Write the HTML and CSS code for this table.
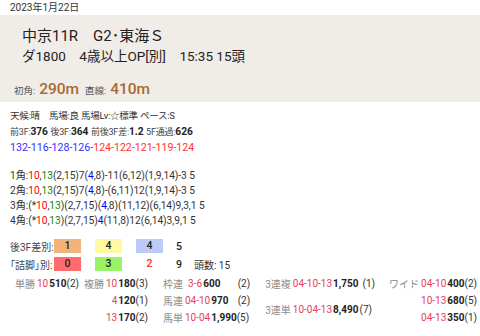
FILE: index.html
```html
<!DOCTYPE html>
<html lang="ja">
<head>
<meta charset="utf-8">
<link rel="stylesheet" href="styles.css">
</head>
<body>
<div class="date">2023年1月22日</div>
<div class="head">
  <div class="title">中京11R　G2･東海Ｓ</div>
  <div class="sub">ダ1800　4歳以上OP[別]　15:35 15頭</div>
  <div class="course"><span class="lb">初角:</span> <span class="val">290m</span> <span class="lb lb2">直線:</span> <span class="val">410m</span></div>
</div>
<div class="info">
  <div class="line l1">天候:晴　馬場:良 馬場Lv:☆標準 ペース:S</div>
  <div class="line"><span class="sm">前3F:</span><b>376</b> <span class="sm">後3F:</span><b>364</b> <span class="sm">前後3F差:</span><b>1.2</b> <span class="sm">5F通過:</span><b>626</b></div>
  <div class="line lap"><span class="bl">132-116-128-126-</span><span class="rd">124-122-121-119-124</span></div>
</div>
<div class="corners">
  <div>1角:<span class="r">10</span>,<span class="g">13</span>(2,15)7(<span class="b">4</span>,8)-11(6,12)(1,9,14)-3 5</div>
  <div>2角:<span class="r">10</span>,<span class="g">13</span>(2,15)7(<span class="b">4</span>,8)-(6,11)12(1,9,14)-3 5</div>
  <div>3角:(*<span class="r">10</span>,<span class="g">13</span>)(2,7,15)(<span class="b">4</span>,8)(11,12)(6,14)9,3,1 5</div>
  <div>4角:(*<span class="r">10</span>,<span class="g">13</span>)(2,7,15)<span class="b">4</span>(11,8)12(6,14)3,9,1 5</div>
</div>
<div class="diff">
  <div class="drow"><span class="dl">後3F差別:</span><span class="box c-or">1</span><span class="box c-ye">4</span><span class="box c-bl">4</span><span class="rest">5</span></div>
  <div class="drow"><span class="dl">「詰脚」別:</span><span class="box c-rd">0</span><span class="box c-gr">3</span><span class="box t-rd">2</span><span class="rest">9</span><span class="cnt">頭数: 15</span></div>
</div>
<div class="pay">
  <div class="grp ga">
    <span class="k">単勝</span><span class="n">10</span><span class="p">510</span><span class="o">(2)</span>
  </div>
  <div class="grp gb">
    <span class="k">複勝</span><span class="n">10</span><span class="p">180</span><span class="o">(3)</span>
    <span></span><span class="n">4</span><span class="p">120</span><span class="o">(1)</span>
    <span></span><span class="n">13</span><span class="p">170</span><span class="o">(2)</span>
  </div>
  <div class="grp gc">
    <span class="k">枠連</span><span class="n n1">3-6</span><span class="p p1">600</span><span class="o">(2)</span>
    <span class="k">馬連</span><span class="n">04-10</span><span class="p">970</span><span class="o">(2)</span>
    <span class="k">馬単</span><span class="n">10-04</span><span class="p">1,990</span><span class="o o3">(5)</span>
  </div>
  <div class="grp gd">
    <span class="k">3連複</span><span class="n">04-10-13</span><span class="p">1,750</span><span class="o o4">(1)</span>
    <span class="k span2">3連単</span><span class="n span2">10-04-13</span><span class="p span2">8,490</span><span class="o span2">(7)</span>
  </div>
  <div class="grp ge">
    <span class="k">ワイド</span><span class="n">04-10</span><span class="p">400</span><span class="o">(2)</span>
    <span></span><span class="n">10-13</span><span class="p">680</span><span class="o">(5)</span>
    <span></span><span class="n">04-13</span><span class="p">350</span><span class="o">(1)</span>
  </div>
</div>
</body>
</html>
```
FILE: styles.css
```css
html, body {
  margin: 0;
  padding: 0;
  background: #fff;
}
body {
  font-family: Roboto, "Noto Sans CJK JP", sans-serif;
  color: #333;
  width: 480px;
  height: 336px;
  overflow: hidden;
}
.date {
  font-size: 10px;
  line-height: 15px;
  padding-left: 10px;
  color: #333;
}
.head {
  background: #f0ede8;
  height: 87px;
  padding: 10px 0 0 22px;
  box-sizing: border-box;
}
.title {
  font-size: 15px;
  line-height: 22px;
  color: #222;
}
.sub {
  font-size: 13.5px;
  line-height: 18px;
  color: #222;
}
.course {
  margin-top: 14px;
  margin-left: -8px;
  font-size: 15.5px;
  line-height: 20px;
}
.course .lb {
  font-size: 9.5px;
  color: #555;
}
.course .lb2 {
  margin-left: 2px;
}
.course .val {
  color: #a86a30;
  font-weight: 500;
}
.info {
  padding: 6px 0 0 10px;
}
.line {
  font-size: 10px;
  line-height: 16px;
  color: #333;
  white-space: nowrap;
}
.l1 {
  font-size: 9.5px;
  letter-spacing: -0.25px;
}
.line .sm {
  font-size: 9px;
  letter-spacing: -0.2px;
  color: #444;
}
.line b {
  font-size: 10.2px;
  font-weight: 700;
  color: #222;
}
.lap {
  font-size: 10.6px;
}
.bl { color: #3333ff; }
.rd { color: #ff3333; }
.corners {
  padding: 12px 0 0 10px;
  font-size: 10.2px;
  letter-spacing: -0.05px;
  line-height: 15px;
  color: #333;
  white-space: nowrap;
}
.r { color: #ff0000; }
.g { color: #0a8a0a; }
.b { color: #0000ff; }
.diff {
  padding: 11px 0 0 10px;
  font-size: 10.5px;
}
.drow {
  display: flex;
  align-items: center;
  height: 14px;
  margin-bottom: 4px;
}
.dl {
  width: 44px;
  color: #444;
  font-size: 10px;
  white-space: nowrap;
  font-feature-settings: "palt";
}
.box {
  width: 27px;
  height: 14px;
  line-height: 14px;
  text-align: center;
  margin-right: 14px;
  color: #222;
  font-weight: 500;
}
.c-or { background: #f2b27a; }
.c-ye { background: #fff9a0; }
.c-bl { background: #bccbf8; }
.c-rd { background: #ff6b6f; }
.c-gr { background: #9af266; }
.t-rd { color: #ff3030; }
.rest {
  margin-left: -1px;
  color: #222;
  font-weight: 500;
}
.cnt {
  margin-left: 12px;
  color: #333;
  font-size: 10px;
}
.pay {
  display: flex;
  align-items: flex-start;
  margin-top: 4px;
  padding-left: 15px;
  font-size: 10px;
}
.grp {
  display: grid;
  grid-template-columns: auto auto auto auto;
  grid-auto-rows: 17px;
  align-items: center;
  white-space: nowrap;
}
.ga { margin-right: 5px; }
.gb { margin-right: 15px; }
.gc { margin-right: 15px; }
.gd { margin-right: 14px; }
.k {
  color: #8c8c8c;
  font-size: 10px;
}
.n {
  color: #e8405a;
  text-align: right;
  padding-left: 2px;
}
.p {
  color: #222;
  font-weight: 700;
  padding-left: 1px;
}
.o {
  color: #333;
}
.gc .n { text-align: left; }
.gc .n1 { padding-left: 5px; }
.gc .p1 { margin-left: -8px; }
.gc .o { padding-left: 1px; }
.gc .o3 { padding-left: 0; }
.gd .n { padding-left: 2px; }
.gd .o { padding-left: 1px; }
.gd .o4 { padding-left: 4px; }
.span2 {
  grid-row: 2 / 4;
  align-self: center;
}
```
